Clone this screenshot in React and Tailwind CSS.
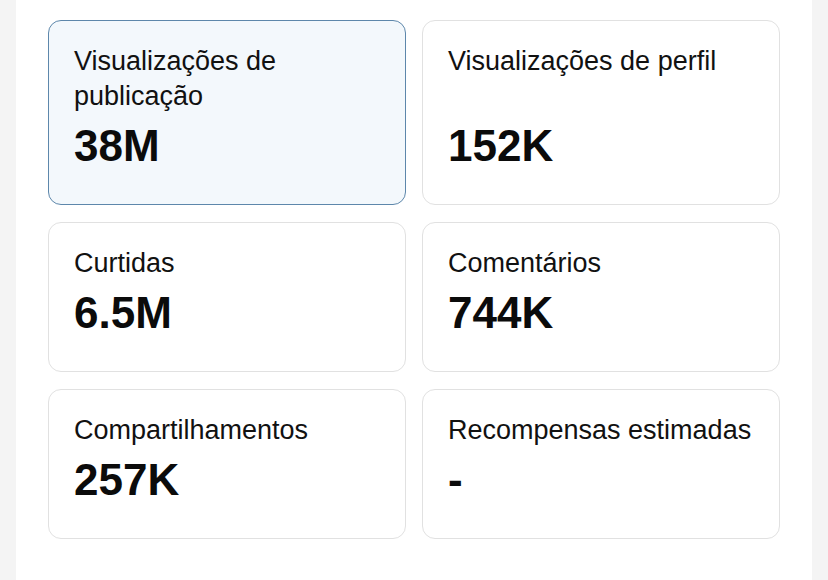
import React from "react";

const stats = [
  { label: "Visualizações de publicação", value: "38M", active: true },
  { label: "Visualizações de perfil", value: "152K" },
  { label: "Curtidas", value: "6.5M" },
  { label: "Comentários", value: "744K" },
  { label: "Compartilhamentos", value: "257K" },
  { label: "Recompensas estimadas", value: "-" },
];

function Card({ label, value, active }) {
  return (
    <div
      className={
        active
          ? "flex flex-col rounded-[13px] border border-[#5d87ab] bg-[#f3f8fc] pl-[25px] pr-4 pt-[23px] pb-[34px]"
          : "flex flex-col rounded-[13px] border border-[#e1e1e1] bg-white pl-[25px] pr-4 pt-[23px] pb-[34px]"
      }
    >
      <div className={active ? "text-[27px] leading-[35px] text-[#111111] pr-16" : "text-[27px] leading-[35px] text-[#111111] whitespace-nowrap"}>{label}</div>
      <div className="mt-auto pt-2 text-[44px] leading-[48px] font-bold text-[#0b0b0b]">{value}</div>
    </div>
  );
}

export default function App() {
  return (
    <div
      className="h-[580px] w-[828px] bg-[#f4f4f4] px-4"
      style={{ fontFamily: '"Liberation Sans", Arial, sans-serif' }}
    >
      <div className="h-full bg-white px-8 pt-5">
        <div className="grid grid-cols-2 gap-x-4 gap-y-[17px]">
          {stats.map((s) => (
            <Card key={s.label} {...s} />
          ))}
        </div>
      </div>
    </div>
  );
}
